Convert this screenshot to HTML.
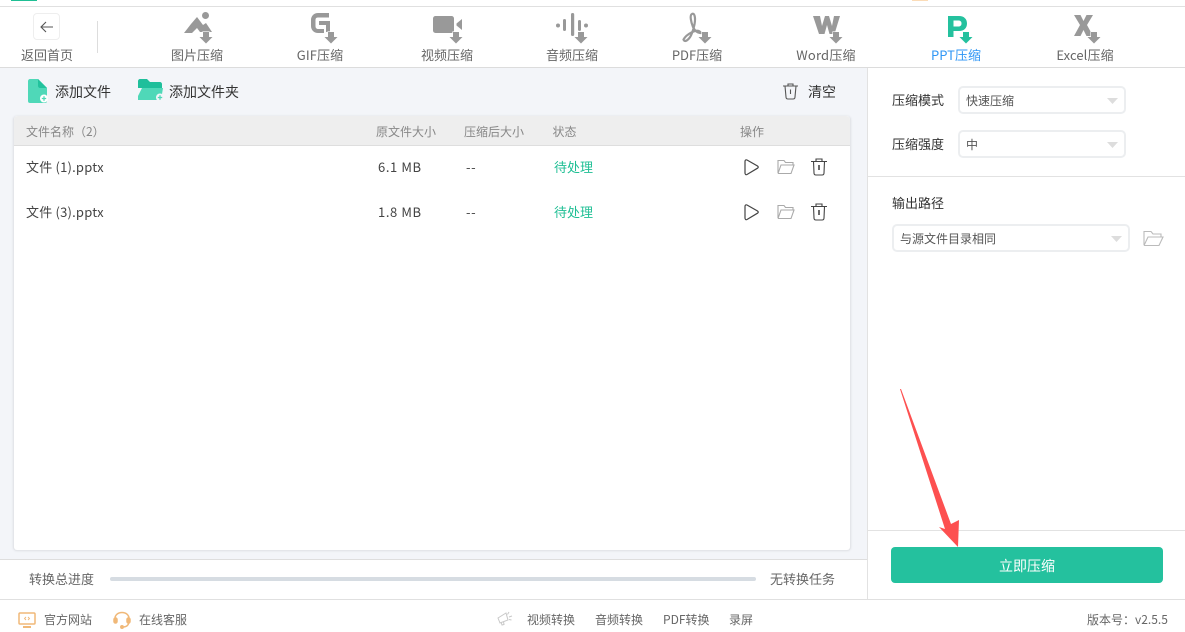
<!DOCTYPE html>
<html lang="zh"><head><meta charset="utf-8"><title>压缩</title>
<style>
html,body{margin:0;padding:0;background:#fff}
#p{position:relative;width:1185px;height:632px;overflow:hidden;background:#fff;font-family:"Noto Sans CJK SC","Liberation Sans",sans-serif;font-size:13px;color:#333}
#p div{position:absolute}
.t{white-space:nowrap;line-height:18px;height:18px}
.n{color:#666;text-align:center;width:100px;top:46px}
.h{color:#888;font-size:12px;top:123px}
.c{color:#444;font-size:13px}
.m{letter-spacing:.6px}
.g{color:#1fbf94}
.s{background:#fff;border:2px solid #eceef0;border-radius:5px;box-sizing:border-box}
.f{color:#666;font-size:12px;top:611px}
.a{stroke:#fff;stroke-width:1.200;paint-order:stroke}
svg{position:absolute;overflow:visible}
</style></head><body><div id="p">
<div style="left:11px;top:0;width:26px;height:1px;background:#1fbf94"></div>
<div style="left:912px;top:0;width:16px;height:1px;background:#fbdcb8"></div>
<div style="left:0;top:6px;width:1185px;height:1px;background:#e0e0e0"></div>
<div style="left:0;top:67px;width:1185px;height:1px;background:#dcdcdc"></div>
<div style="left:0;top:68px;width:867px;height:491px;background:#f3f5f9"></div>
<div style="left:867px;top:68px;width:1px;height:531px;background:#e2e2e2"></div>

<div style="left:33px;top:13px;width:27px;height:27px;box-sizing:border-box;border:1px solid #eee;border-radius:4px"></div>
<svg style="left:40px;top:20px" width="14" height="14" fill="none" stroke="#555" stroke-width="1.1"><path d="M1 7H13M6 2L1 7L6 12"/></svg>
<div class="t n" style="left:-3px">返回首页</div>
<div style="left:97px;top:21px;width:1px;height:32px;background:#ddd"></div>

<!-- nav icons -->
<svg style="left:0;top:0" width="1185" height="68" fill="#999">
<circle cx="205.500" cy="15.500" r="3.500"/>
<path d="M184 33L191 24L197 17L203 25L206 23L212 32H200L197 28L192 33Z"/>
<path class="a" d="M203 32H209V37H212.500L206 43.500L199.500 37H203Z"/>

<path d="M329 13H318C314 13 311 16 311 20V26C311 30 314 33 318 33H324V29H318.500C316.500 29 315.500 28 315.500 26V20C315.500 18 316.500 17.500 318.500 17.500H329ZM319 21H330V32H326V25H319Z"/>
<path class="a" d="M328 32H334V37H337.500L331 43.500L324.500 37H328Z"/>

<rect x="433" y="16" width="21" height="17" rx="2.500"/>
<path d="M462 19V30L456.500 25.500V23.500Z"/>
<path class="a" d="M453 32H459V37H462.500L456 43.500L449.500 37H453Z"/>

<circle cx="558" cy="25.500" r="2"/>
<rect x="563" y="19" width="3" height="12" rx="1.500"/>
<rect x="571" y="13" width="3.200" height="23" rx="1.500"/>
<rect x="578" y="20" width="3" height="11" rx="1.500"/>
<circle cx="586" cy="25.500" r="2"/>
<path class="a" d="M578 32H584V37H587.500L581 43.500L574.500 37H578Z"/>

<path fill="none" stroke="#999" stroke-width="2.200" d="M692 14C689.500 15 691 22 693 27C695 31 698 33.500 701 33C697 27 686 35 683.500 39.500C684.500 43 689.500 40 692 33C694 28 696 20 694.500 15.500C694 13.500 692.500 13.500 692 14Z"/>
<path class="a" d="M702 32H708V37H711.500L705 43.500L698.500 37H702Z"/>

<path d="M813 16H820L822 26L825 16H829L832 26L834 16H840L834.500 34H829.500L827 25L824.500 34H819Z"/>
<path class="a" d="M833 32H839V37H842.500L836 43.500L829.500 37H833Z"/>

<path fill="#24c19e" d="M948 16H959C964 16 967 19 967 23.500C967 28 964 31 959 31H953.500V37H948ZM953.500 20.500V26.500H958.500C960.500 26.500 961.500 25.300 961.500 23.500C961.500 21.700 960.500 20.500 958.500 20.500Z"/>
<path class="a" fill="#24c19e" d="M963 32H969V37H972.500L966 43.500L959.500 37H963Z"/>

<path d="M1074 15H1080.500L1083.500 21L1086.500 15H1093L1087 25L1093 36H1086.500L1083.500 30L1080.500 36H1074L1080 25Z"/>
<path class="a" d="M1091 32H1097V37H1100.500L1094 43.500L1087.500 37H1091Z"/>
</svg>

<div class="t n" style="left:147px">图片压缩</div>
<div class="t n" style="left:270px;letter-spacing:.1px">GIF压缩</div>
<div class="t n" style="left:397px">视频压缩</div>
<div class="t n" style="left:522px">音频压缩</div>
<div class="t n" style="left:647px">PDF压缩</div>
<div class="t n" style="left:776px;letter-spacing:.2px">Word压缩</div>
<div class="t n" style="left:906px;color:#2f96f5">PPT压缩</div>
<div class="t n" style="left:1035px;letter-spacing:.1px">Excel压缩</div>

<!-- toolbar -->
<svg style="left:28px;top:79px" width="20" height="25"><path fill="#4fd8b8" d="M2 0H10L19 9V22C19 23.500 18 24 17 24H2C1 24 0 23.500 0 22V2C0 1 1 0 2 0Z"/><path fill="#22c29d" d="M10 0L19 9H12C11 9 10 8 10 7Z"/><circle cx="16" cy="19.500" r="4" fill="#fff"/><path d="M13.800 19.500H18.200M16 17.300V21.700" stroke="#4fd8b8" stroke-width="1.300"/></svg>
<div class="t" style="left:55px;top:83px;color:#333;font-size:14px">添加文件</div>
<svg style="left:138px;top:79px" width="26" height="24"><path fill="#1fbf9b" d="M2 0H9L12 3H22C23 3 24 4 24 5V9H0V2C0 1 1 0 2 0Z"/><path fill="#4fd8b8" d="M4 9H25L23 21H0V17Z"/><circle cx="22" cy="18.500" r="4" fill="#f3f5f9"/><path d="M19.800 18.500H24.200M22 16.300V20.700" stroke="#4fd8b8" stroke-width="1.300"/></svg>
<div class="t" style="left:169px;top:83px;color:#333;font-size:14px">添加文件夹</div>
<svg style="left:783px;top:83px" width="16" height="17" fill="none" stroke="#555" stroke-width="1.100"><path d="M0 3H15M5 3V1H10V3M2 3L3 14C3 15.500 4 16 5 16H10C11 16 12 15.500 12 14L13 3M7.500 6.500V11"/></svg>
<div class="t" style="left:808px;top:83px;color:#333;font-size:14px">清空</div>

<!-- table -->
<div style="left:13px;top:116px;width:838px;height:435px;box-sizing:border-box;background:#fff;border:1px solid #e4e6ea;border-top:0;border-radius:4px;box-shadow:0 0 2px #dfe1e5"></div>
<div style="left:14px;top:116px;width:836px;height:29px;background:#eeeeee;border-bottom:1px solid #dedede;border-radius:4px 4px 0 0"></div>
<div class="t h" style="left:26px">文件名称（2）</div>
<div class="t h" style="left:376px">原文件大小</div>
<div class="t h" style="left:464px">压缩后大小</div>
<div class="t h" style="left:552.500px">状态</div>
<div class="t h" style="left:740px">操作</div>

<div class="t c" style="left:26px;top:158px;letter-spacing:.2px">文件 (1).pptx</div>
<div class="t c m" style="left:378px;top:158px">6.1 MB</div>
<div class="t c m" style="left:466px;top:158px">--</div>
<div class="t g" style="left:554px;top:158px">待处理</div>
<div class="t c" style="left:26px;top:203px;letter-spacing:.2px">文件 (3).pptx</div>
<div class="t c m" style="left:378px;top:203px">1.8 MB</div>
<div class="t c m" style="left:466px;top:203px">--</div>
<div class="t g" style="left:554px;top:203px">待处理</div>

<svg style="left:744px;top:159px" width="15" height="17" fill="none" stroke="#444" stroke-width="1.200"><path d="M1 2.500C1 1 2 .5 3 1L13.500 7C14.500 7.800 14.500 8.500 13.500 9.200L3 15.500C2 16 1 15.500 1 14Z"/></svg>
<svg style="left:777px;top:159px" width="18" height="16" fill="none" stroke="#aaa" stroke-width="1.100"><path d="M1 14V1.500H7L8.500 3.500H16V6M1 14.500H14L17 6H4L1 14.500"/></svg>
<svg style="left:811px;top:158px" width="16" height="18" fill="none" stroke="#444" stroke-width="1.100"><path d="M0 3.500H16M5 3.500V1H11V3.500M2.500 3.500L3 15C3 16.500 4 17 5 17H11C12 17 13 16.500 13 15L13.500 3.500"/><path d="M8 7V12" stroke-width="1.600"/></svg>
<svg style="left:744px;top:204px" width="15" height="17" fill="none" stroke="#444" stroke-width="1.200"><path d="M1 2.500C1 1 2 .5 3 1L13.500 7C14.500 7.800 14.500 8.500 13.500 9.200L3 15.500C2 16 1 15.500 1 14Z"/></svg>
<svg style="left:777px;top:204px" width="18" height="16" fill="none" stroke="#aaa" stroke-width="1.100"><path d="M1 14V1.500H7L8.500 3.500H16V6M1 14.500H14L17 6H4L1 14.500"/></svg>
<svg style="left:811px;top:203px" width="16" height="18" fill="none" stroke="#444" stroke-width="1.100"><path d="M0 3.500H16M5 3.500V1H11V3.500M2.500 3.500L3 15C3 16.500 4 17 5 17H11C12 17 13 16.500 13 15L13.500 3.500"/><path d="M8 7V12" stroke-width="1.600"/></svg>

<!-- progress -->
<div style="left:0;top:559px;width:867px;height:1px;background:#dedede"></div>
<div class="t" style="left:29px;top:570px;color:#666">转换总进度</div>
<div style="left:110px;top:577px;width:646px;height:4px;background:#d6dce2;border-radius:2px"></div>
<div class="t" style="left:770px;top:570px;color:#666">无转换任务</div>

<!-- right -->
<div class="t" style="left:892px;top:91px;color:#333">压缩模式</div>
<div class="s" style="left:958px;top:86px;width:168px;height:28px"></div>
<div class="t" style="left:966px;top:92px;font-size:12px;color:#555">快速压缩</div>
<svg style="left:1107px;top:98px" width="11" height="6"><path d="M0 0H11L5.500 6Z" fill="#ddd"/></svg>
<div class="t" style="left:892px;top:135px;color:#333">压缩强度</div>
<div class="s" style="left:958px;top:130px;width:168px;height:28px"></div>
<div class="t" style="left:966px;top:136px;font-size:12px;color:#555">中</div>
<svg style="left:1107px;top:142px" width="11" height="6"><path d="M0 0H11L5.500 6Z" fill="#ddd"/></svg>
<div style="left:868px;top:176px;width:317px;height:1px;background:#e2e2e2"></div>
<div class="t" style="left:892px;top:194px;color:#333">输出路径</div>
<div class="s" style="left:892px;top:224px;width:238px;height:28px"></div>
<div class="t" style="left:900px;top:230px;font-size:12px;color:#555">与源文件目录相同</div>
<svg style="left:1111px;top:236px" width="11" height="6"><path d="M0 0H11L5.500 6Z" fill="#ddd"/></svg>
<svg style="left:1143px;top:230px" width="21" height="17" fill="none" stroke="#bbb" stroke-width="1.100"><path d="M1 15V1.500H8L10 4H18V7M1 15.500H16L20 7H5L1 15.500"/></svg>
<div style="left:868px;top:530px;width:317px;height:1px;background:#e2e2e2"></div>
<div style="left:891px;top:547px;width:272px;height:36px;background:#24c19e;border-radius:4px"></div>
<div class="t" style="left:891px;top:557px;width:272px;text-align:center;color:#fff;font-size:14px;">立即压缩</div>
<svg style="left:0;top:0" width="1185" height="632"><path fill="#fd5050" d="M900 389L901 389L951 524L959 520L958 547L939 527L945 529Z"/></svg>

<!-- footer -->
<div style="left:0;top:599px;width:1185px;height:1px;background:#e0e0e0"></div>
<svg style="left:18px;top:612px" width="18" height="16" fill="none" stroke="#f0b878" stroke-width="1.500"><rect x="1" y="1" width="16" height="11" rx="1"/><path d="M5 15H13" stroke-width="2"/><path d="M8 5L6.500 6.500L8 8M10 5L11.500 6.500L10 8" stroke-width=".9"/></svg>
<div class="t f" style="left:44px">官方网站</div>
<svg style="left:113px;top:611px" width="18" height="18" fill="none" stroke="#f0b878" stroke-width="1.500"><path d="M2 9V7.500C2 4 5 1.500 9 1.500C13 1.500 16 4 16 7.500V10C16 13.500 14 16 10 16"/><rect x="1" y="7" width="3" height="5" rx="1.500" fill="#f0b878"/><rect x="14" y="7" width="3" height="5" rx="1.500" fill="#f0b878"/><circle cx="9" cy="16" r="1.200" fill="#f0b878"/></svg>
<div class="t f" style="left:139px">在线客服</div>
<svg style="left:497px;top:610px" width="16" height="16" fill="none" stroke="#c8c8c8" stroke-width="1"><path d="M1 8L9 3L11 10L3 13ZM4 12L5 15L7 14.500L6.500 11.500M12 2L10.500 4.500M15 6L12 7M14.500 10L12 9.500"/></svg>
<div class="t f" style="left:527px">视频转换</div>
<div class="t f" style="left:595px">音频转换</div>
<div class="t f" style="left:663px">PDF转换</div>
<div class="t f" style="left:729px">录屏</div>
<div class="t f" style="left:1087px">版本号：v2.5.5</div>
</div></body></html>
